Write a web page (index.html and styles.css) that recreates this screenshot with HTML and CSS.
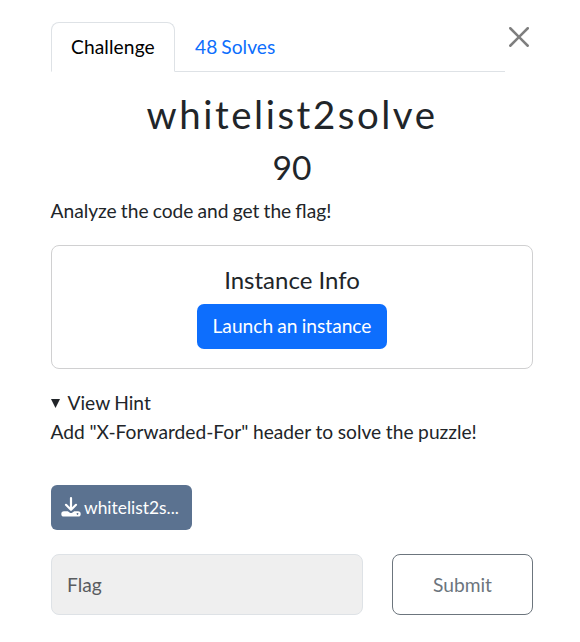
FILE: index.html
```html
<!DOCTYPE html>
<html lang="en">
<head>
<meta charset="utf-8">
<title>whitelist2solve</title>
<link rel="stylesheet" href="styles.css">
</head>
<body>
<main class="modal">
  <header class="top">
    <nav class="tabs">
      <a class="tab active">Challenge</a>
      <a class="tab">48 Solves</a>
    </nav>
    <button class="close" aria-label="Close"><svg viewBox="0 0 16 16"><path d="M.293.293a1 1 0 0 1 1.414 0L8 6.586 14.293.293a1 1 0 1 1 1.414 1.414L9.414 8l6.293 6.293a1 1 0 0 1-1.414 1.414L8 9.414l-6.293 6.293a1 1 0 0 1-1.414-1.414L6.586 8 .293 1.707a1 1 0 0 1 0-1.414z"/></svg></button>
  </header>
  <h2 class="name">whitelist2solve</h2>
  <h3 class="value">90</h3>
  <p class="desc">Analyze the code and get the flag!</p>
  <section class="card">
    <h5 class="card-title">Instance Info</h5>
    <button class="launch">Launch an instance</button>
  </section>
  <details class="hint" open>
    <summary>View Hint</summary>
    <p>Add "X-Forwarded-For" header to solve the puzzle!</p>
  </details>
  <a class="file"><svg viewBox="0 0 20 20"><path d="M10 1.200v11M5 7.800l5 5 5-5" fill="none" stroke="currentColor" stroke-width="2.200" stroke-linecap="round" stroke-linejoin="round"/><path d="M3 14.200h3.800l1.700 1.300q1.500 1 3 0l1.700-1.300H17a2.700 2.700 0 0 1 0 5.400H3a2.700 2.700 0 0 1 0-5.400zM16.500 16a.9.9 0 1 0 .01 0z" fill-rule="evenodd"/></svg><span>whitelist2s...</span></a>
  <form class="submit-row">
    <input class="flag" placeholder="Flag" aria-label="Flag">
    <button class="submit" type="button">Submit</button>
  </form>
</main>
</body>
</html>
```

FILE: styles.css
```css
* { box-sizing: border-box; }
body { margin: 0; background: #fff; color: #212529; font: 19.2px/29px Lato, sans-serif; }
h2, h3, h5, p { margin: 0; font-weight: 400; }
button, input { font: inherit; }
.modal { width: 482px; margin: 22px 0 0 51px; }
.top { display: flex; justify-content: space-between; height: 50px; }
.tabs { display: flex; width: 454px; border-bottom: 1px solid #dee2e6; }
.tab { height: 50px; padding: 9px 19px; border: 1px solid transparent; border-radius: 8px 8px 0 0; color: #0d6efd; word-spacing: -.8px; }
.active { width: 124px; color: #000; background: #fff; border-color: #dee2e6 #dee2e6 #fff; letter-spacing: .1px; }
.close { width: 20px; height: 20px; margin: 4.5px 4px 0 0; padding: 0; border: 0; background: none; opacity: .5; }
.close svg { display: block; width: 20px; height: 20px; }
.name { margin-top: 19px; font-size: 38.4px; line-height: 46px; letter-spacing: 2.55px; text-align: center; }
.value { margin-top: 10px; font-size: 33.6px; line-height: 40px; text-align: center; }
.desc { margin-top: 9px; margin-left: -.5px; word-spacing: -.8px; }
.card { display: flex; flex-direction: column; align-items: center; height: 124px; margin-top: 20px; padding-top: 19px; border: 1px solid #d0d0d1; border-radius: 8px; }
.card-title { margin-bottom: 10px; font-size: 24px; line-height: 29px; }
.launch { width: 190px; height: 45px; padding: 0 0 2px; border: 0; border-radius: 7px; background: #0d6efd; color: #fff; word-spacing: -.8px; }
.hint { margin-top: 19px; }
.hint p { margin-left: -.5px; word-spacing: -.3px; }
.hint summary { display: flex; align-items: center; gap: 7.5px; list-style: none; word-spacing: -.5px; }
.hint summary::before { content: ""; width: 9px; height: 9px; margin-top: 2px; background: currentColor; clip-path: polygon(0 0, 100% 0, 50% 100%); }
.file { display: flex; align-items: center; gap: 3px; width: 141px; height: 45px; margin-top: 39px; padding-left: 10px; border-radius: 6px; background: #5b7290; color: #fff; font-size: 17.4px; }
.file svg { width: 20px; height: 20px; margin-top: -1px; fill: currentColor; }
.submit-row { display: flex; justify-content: space-between; margin: 24px 0 0; }
.flag { width: 312px; height: 61px; padding: 0 15px; border: 1px solid #dee2e6; border-radius: 8px; background: #efefef; color: #545454; }
.flag::placeholder { color: #595c5f; opacity: 1; }
.submit { width: 141px; height: 61px; padding: 0; border: 1px solid #6c757d; border-radius: 8px; background: #fff; color: #6c757d; }
```
